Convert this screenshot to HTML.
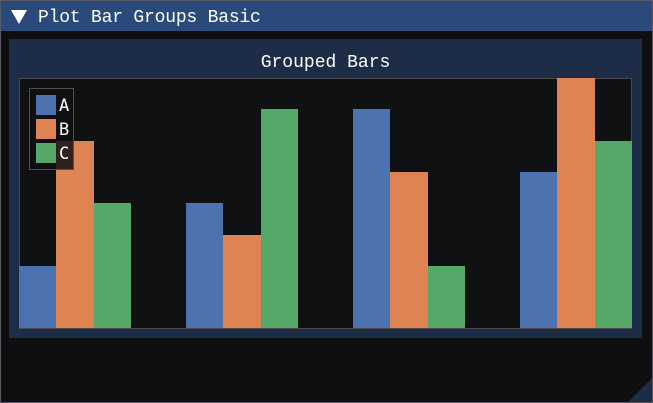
<!DOCTYPE html><html><head><style>
body{margin:0;width:653px;height:403px;background:#0f0f0f;overflow:hidden;font-family:"Liberation Mono",monospace;}
.win{position:absolute;left:0;top:0;width:651px;height:401px;border:1px solid #5a5a66;background:#0f0f0f;}
.tb{position:absolute;left:0;top:0;width:651px;height:30px;background:#294a7a;}
.tt{position:absolute;left:37px;top:7px;color:#fff;font-size:18px;letter-spacing:-0.2px;}
.tri{position:absolute;left:10px;top:9px;width:0;height:0;border-left:8px solid transparent;border-right:8px solid transparent;border-top:14px solid #fff;}
.frame{position:absolute;left:9px;top:39px;width:633px;height:299px;background:#1e2d47;}
.pt{position:absolute;left:0;width:633px;top:14px;text-align:center;color:#fff;font-size:18px;}
.area{position:absolute;left:19px;top:78px;width:611px;height:249px;background:#101113;border:1px solid #4a4a4a;}
.b{position:absolute;}
.A{background:#4c72b0}.B{background:#dd8452}.C{background:#55a868}
.leg{position:absolute;left:29px;top:88px;width:43px;height:80px;border:1px solid #505050;background:rgba(16,17,19,0.85);}
.sw{position:absolute;left:6px;width:20px;height:20px;}
.lt{position:absolute;left:29px;color:#fff;font-size:17px;font-family:"DejaVu Sans Mono",monospace;}
.grip{position:absolute;right:1px;bottom:1px;width:0;height:0;border-left:24px solid transparent;border-bottom:24px solid #1e2d47;}
</style></head><body>
<div class="win"><div class="tb"><div class="tri"></div><div class="tt">Plot Bar Groups Basic</div></div></div>
<div class="frame"><div class="pt">Grouped Bars</div></div>
<div class="area"></div>
<div class="b A" style="left:19px;width:37px;top:266px;height:62px"></div>
<div class="b B" style="left:56px;width:38px;top:141px;height:187px"></div>
<div class="b C" style="left:94px;width:37px;top:203px;height:125px"></div>
<div class="b A" style="left:186px;width:37px;top:203px;height:125px"></div>
<div class="b B" style="left:223px;width:38px;top:235px;height:93px"></div>
<div class="b C" style="left:261px;width:37px;top:109px;height:219px"></div>
<div class="b A" style="left:353px;width:37px;top:109px;height:219px"></div>
<div class="b B" style="left:390px;width:38px;top:172px;height:156px"></div>
<div class="b C" style="left:428px;width:37px;top:266px;height:62px"></div>
<div class="b A" style="left:520px;width:37px;top:172px;height:156px"></div>
<div class="b B" style="left:557px;width:38px;top:78px;height:250px"></div>
<div class="b C" style="left:595px;width:37px;top:141px;height:187px"></div>
<div class="leg">
<div class="sw A" style="top:6px"></div><div class="lt" style="top:7px">A</div>
<div class="sw B" style="top:30px"></div><div class="lt" style="top:31px">B</div>
<div class="sw C" style="top:54px"></div><div class="lt" style="top:55px">C</div>
</div>
<div class="grip"></div>
</body></html>
